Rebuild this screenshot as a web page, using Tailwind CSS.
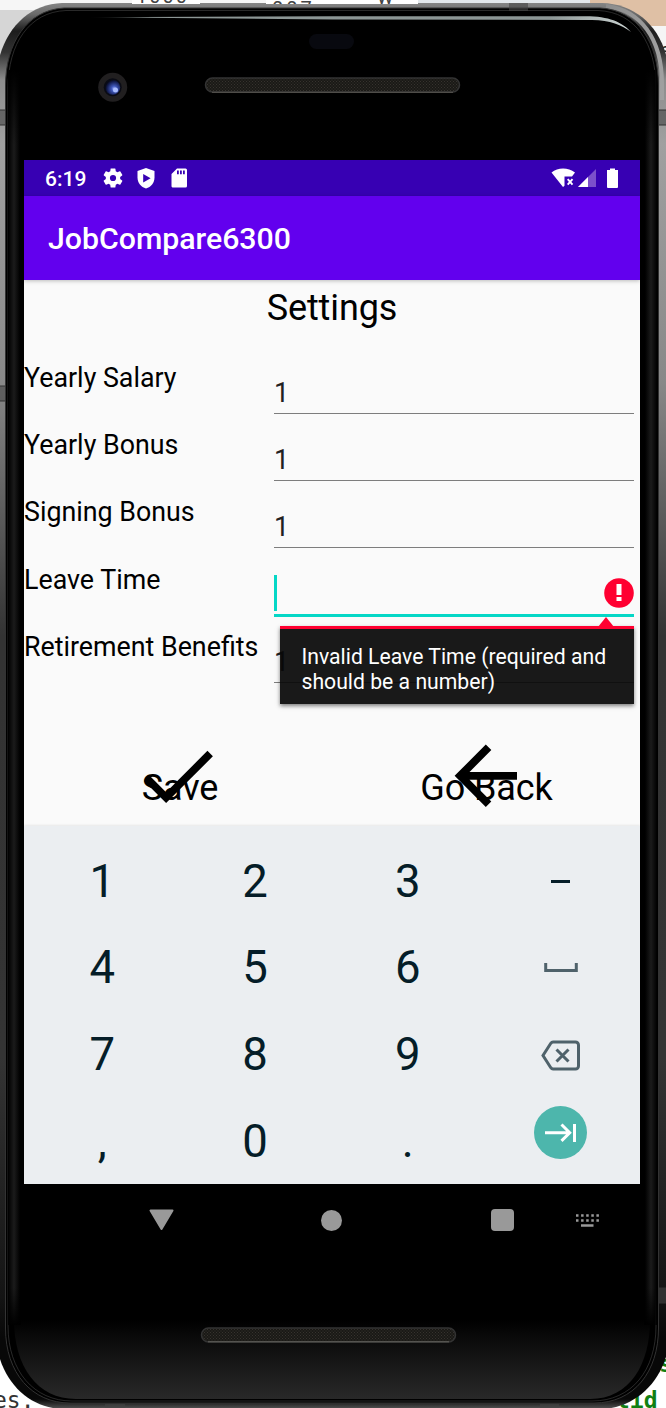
<!DOCTYPE html>
<html lang="en">
<head>
<meta charset="utf-8">
<title>JobCompare6300</title>
<script src="https://cdn.jsdelivr.net/npm/@tailwindcss/browser@4"></script>
</head>
<body class="bg-white">
<div class="relative w-[666px] h-[1408px] overflow-hidden font-[Roboto,sans-serif] text-black">
  <!-- desktop behind the device -->
  <div class="absolute inset-x-0 top-0 h-20 overflow-hidden bg-[#d6d6d6]">
    <div class="h-2.5 bg-[#f6f6f6]"></div>
    <div class="absolute left-[418px] top-0 w-[172px] h-3 bg-[#e3e8ec]"></div>
    <div class="absolute left-[590px] top-0 w-[76px] h-[26px] bg-[#dfc0a5]"></div>
    <div class="absolute left-[640px] top-[26px] w-[26px] h-14 bg-[#f5f5f5]"></div>
    <div class="absolute left-[660px] top-[38px] text-[20px] leading-6 text-[#222]">e</div>
  </div>
  <div class="absolute left-[-7px] top-[1388px] font-[DejaVu_Sans_Mono,monospace] text-[23px] leading-6 text-[#333]">es.</div>
  <div class="absolute left-[616px] top-[1386px] font-[DejaVu_Sans_Mono,monospace] font-bold text-[23px] leading-7 text-[#128012]">tid</div>
  <div class="absolute left-[659px] top-[1350px] font-[DejaVu_Sans_Mono,monospace] font-bold text-[23px] leading-7 text-[#128012]">s</div>

  <!-- device body -->
  <svg class="absolute inset-0" width="666" height="1408" viewBox="0 0 666 1408">
    <defs>
      <linearGradient id="metal" x1="0" y1="0" x2="0" y2="1">
        <stop offset="0" stop-color="#858585"/><stop offset=".008" stop-color="#6a6a6a"/><stop offset=".02" stop-color="#1c1c1c"/><stop offset=".035" stop-color="#333"/><stop offset=".055" stop-color="#8d8d8d"/><stop offset=".1" stop-color="#a0a0a0"/><stop offset=".27" stop-color="#888"/><stop offset=".45" stop-color="#333"/><stop offset=".75" stop-color="#343434"/><stop offset=".92" stop-color="#141414"/><stop offset=".95" stop-color="#080808"/><stop offset=".993" stop-color="#080808"/><stop offset="1" stop-color="#555"/>
      </linearGradient>
      <linearGradient id="rightcorner" x1="0" y1="0" x2="1" y2="0">
        <stop offset="0" stop-color="#8c8c8c"/><stop offset="1" stop-color="#a0a0a0"/>
      </linearGradient>
      <linearGradient id="chin" x1="0" y1="0" x2="0" y2="1">
        <stop offset="0" stop-color="#000"/><stop offset=".2" stop-color="#090909"/><stop offset="1" stop-color="#292929"/>
      </linearGradient>
      <linearGradient id="shine" x1="0" y1="0" x2="1" y2="0">
        <stop offset="0" stop-color="#000"/><stop offset=".12" stop-color="#8c9695"/><stop offset=".85" stop-color="#8c9695"/><stop offset="1" stop-color="#ccd4d3"/>
      </linearGradient>
      <linearGradient id="fade" x1="0" y1="0" x2="0" y2="1">
        <stop offset="0" stop-color="#000"/><stop offset=".06" stop-color="#000" stop-opacity="0"/><stop offset=".97" stop-color="#000" stop-opacity="0"/><stop offset="1" stop-color="#000"/>
      </linearGradient>
      <linearGradient id="edge" x1="0" y1="0" x2="1" y2="0">
        <stop offset="0" stop-color="#000"/><stop offset=".5" stop-color="#1b1b1b"/><stop offset="1" stop-color="#000"/>
      </linearGradient>
      <pattern id="mesh" width="3" height="3" patternUnits="userSpaceOnUse">
        <rect width="3" height="3" fill="#1a1916"/><path d="M0 0h1v1H0zM1.500 1.500h1v1h-1z" fill="#36332e"/>
      </pattern>
      <radialGradient id="lens" cx=".6" cy=".6" r=".6"><stop offset="0" stop-color="#a3b4ff"/><stop offset=".3" stop-color="#4058bb"/><stop offset=".8" stop-color="#121b4d"/><stop offset="1" stop-color="#080a18"/></radialGradient>
    </defs>
    <path d="M62 3H602C642 4 670 36 670 84V1330C670 1376 638 1409 600 1409H64C28 1409-4 1378-4 1332V84C-4 38 24 4 62 3Z" fill="url(#metal)"/>
    <path d="M606 6C640 10 662 38 662 84V100" fill="none" stroke="url(#rightcorner)" stroke-width="4"/>
    <path d="M64 8H600C638 10 658.500 43 658.500 86V1328C658.500 1372 634 1403 594 1403H70C32 1403 5.500 1373 5.500 1328V86C5.500 43 27 10 64 8Z" fill="#000" stroke="#333"/>
    <path d="M66 10.500H598C636 12 656 44 656 88V1326C656 1370 632 1401 592 1401H72C34 1401 8 1371 8 1326V88C8 44 29 12 66 10.500Z" fill="none" stroke="#4a4a4a" stroke-opacity=".55"/>
    <path d="M14 1320H650C650 1364 630 1399 590 1399H76C37 1399 14 1366 14 1320Z" fill="url(#chin)"/>
    <rect x="8" y="70" width="12" height="1255" fill="url(#edge)"/>
    <rect x="645" y="70" width="12" height="1255" fill="url(#edge)"/>
    <rect x="9" y="70" width="12" height="1255" fill="url(#fade)"/>
    <rect x="644" y="70" width="11" height="1255" fill="url(#fade)"/>
    <path d="M0 110h5v15H0zM659 110h7v15h-7zM0 386h5v15H0zM509 3h19v8h-19zM659 1288h7v15h-7zM105 1404h20v4h-20zM540 1404h19v4h-19z" fill="#444" fill-opacity=".6"/>
    <path d="M0 110h5M0 125h5M659 110h7M659 125h7M0 386h5M0 401h5M659 1288h7M659 1303h7" stroke="#333"/>
    <path d="M87 17.200L333 16.300H590C612 17 624 24 631 32C622 25 610 20.200 592 20L333 19.500Z" fill="url(#shine)"/>
    <rect x="309" y="34" width="45" height="15" rx="7.500" fill="#08090f"/>
    <circle cx="112.700" cy="87.300" r="14.500" fill="#211f20"/><circle cx="112.700" cy="87.300" r="9" fill="#0a0b14"/><circle cx="112.700" cy="87.300" r="7.500" fill="url(#lens)"/><circle cx="115.500" cy="90" r="2.500" fill="#a9bcff"/>
    <rect x="205.500" y="78" width="254" height="14" rx="7" fill="url(#mesh)" stroke="#333" stroke-width="1.500"/>
    <path d="M212 92.300h241" stroke="#5a5853"/>
    <rect x="201.500" y="1328" width="254" height="14" rx="7" fill="url(#mesh)" stroke="#333" stroke-width="1.500"/>
    <path d="M208 1341.800h241" stroke="#666460"/>
  </svg>
  <!-- clipped window text above the device -->
  <div class="absolute left-[132px] top-0 w-[68px] h-1 overflow-hidden bg-white"><div class="-mt-[14px] pl-1 text-[20px] leading-5 tracking-[2px] text-[#444]">1000</div></div>
  <div class="absolute left-[266px] top-0 w-[104px] h-1 overflow-hidden bg-white"><div class="-mt-px pl-1.5 text-[20px] leading-5 tracking-[3px] text-[#444]">007</div></div>
  <div class="absolute left-[370px] top-0 w-12 h-1 overflow-hidden bg-white"><div class="-mt-[13px] pl-[7px] text-[22px] leading-5 text-[#444]">w</div></div>

  <!-- device display -->
  <div class="relative pt-40 pl-6 w-[640px]">
    <div class="h-9 bg-[#3700b3] flex items-center pl-[21px] pr-[21px] text-white">
      <span class="w-[58px] text-[21px] leading-9 font-medium pt-0.5">6:19</span>
      <svg width="20" height="20" viewBox="2 2 20 20" fill="white"><path d="M19.140 12.940c.040-.300.060-.610.060-.940 0-.320-.020-.640-.070-.940l2.030-1.580a.49.49 0 0 0 .120-.610l-1.920-3.320a.488.488 0 0 0-.590-.220l-2.390.960c-.500-.380-1.030-.700-1.620-.940l-.360-2.540a.484.484 0 0 0-.480-.410h-3.840c-.240 0-.430.170-.470.410l-.360 2.540c-.590.240-1.130.570-1.620.940l-2.390-.960c-.220-.080-.470 0-.590.220L2.740 8.870c-.120.210-.080.470.120.610l2.030 1.580c-.050.300-.090.630-.090.940s.020.640.070.940l-2.030 1.580a.49.49 0 0 0-.120.610l1.920 3.320c.120.220.370.290.590.220l2.390-.960c.500.380 1.030.700 1.620.940l.360 2.540c.050.240.240.410.480.410h3.840c.240 0 .440-.170.470-.410l.360-2.540c.590-.240 1.130-.560 1.620-.940l2.390.960c.220.080.470 0 .590-.220l1.920-3.320c.120-.220.070-.470-.120-.610zM12 15.100A3.100 3.100 0 1 1 12 8.900a3.100 3.100 0 0 1 0 6.200z"/></svg>
      <svg class="ml-[14px]" width="18" height="21" viewBox="0 0 18 21"><path d="M9 0l8.500 3v6.500C17.500 14.800 14 19 9 20.500 4 19 .5 14.800.5 9.500V3z" fill="white"/><path d="M6.200 6v8.400l7.400-4.200z" fill="#3700b3"/></svg>
      <svg class="ml-4" width="17" height="20" viewBox="0 0 17 20"><path d="M6 .5h8.500a1.500 1.500 0 0 1 1.500 1.500v16a1.500 1.500 0 0 1-1.500 1.500h-13A1.500 1.500 0 0 1 .5 18V6z" fill="white"/><path d="M6 2.500h1.800v3.700H6zM9 2.500h1.800v3.700H9zM12 2.500h1.800v3.700H12z" fill="#3700b3"/></svg>
      <div class="grow"></div>
      <svg width="68" height="20" viewBox="0 0 68 20"><path d="M.5 4.500C7-1 17-1 24 4.500L21 8.500H13.500V17.800L12 19z" fill="white"/><path d="M16.700 11.200l4.800 5.400M21.500 11.200l-4.800 5.400" stroke="white" stroke-width="1.900"/><path d="M45 1v18H27z" fill="#7c50cb"/><path d="M37 9v10H27z" fill="white"/><path d="M59 .5h5V2h3v17a1 1 0 0 1-1 1h-9a1 1 0 0 1-1-1V2h3z" fill="white"/></svg>
    </div>
    <div class="relative z-10 h-[84px] bg-[#6200ee] flex items-center pl-6 pt-px shadow-[0_1px_4px_rgba(0,0,0,.25)]">
      <h1 class="text-[30.250px] leading-9 font-medium text-white">JobCompare6300</h1>
    </div>
    <main class="h-[546px] bg-[#fafafa] overflow-hidden">
      <h2 class="h-[66px] pt-1.5 text-center text-[36px] leading-[44px] tracking-[-.1px]">Settings</h2>
      <div class="h-[67.400px] flex"><label class="w-[250px] pt-4 text-[26.800px] leading-8 whitespace-nowrap">Yearly Salary</label><div class="w-[360px] h-[68px] pt-[29px] text-[27px] leading-[36px] text-[#212121]"><div class="h-[39px] border-b-[1.500px] border-[#7d7d7d]">1</div></div></div>
      <div class="h-[67.400px] flex"><label class="w-[250px] pt-4 text-[26.800px] leading-8 whitespace-nowrap">Yearly Bonus</label><div class="w-[360px] h-[68px] pt-[29px] text-[27px] leading-[36px] text-[#212121]"><div class="h-[39px] border-b-[1.500px] border-[#7d7d7d]">1</div></div></div>
      <div class="h-[67.400px] flex"><label class="w-[250px] pt-[15px] text-[26.800px] leading-8 whitespace-nowrap">Signing Bonus</label><div class="w-[360px] h-[68px] pt-[28px] text-[27px] leading-[36px] text-[#212121]"><div class="h-[39px] border-b-[1.500px] border-[#7d7d7d]">1</div></div></div>
      <div class="h-[67.400px] flex"><label class="w-[250px] pt-4 text-[26.800px] leading-8 whitespace-nowrap">Leave Time</label>
        <div class="relative w-[360px] h-[69px] pt-[27px]">
          <div class="h-[42px] border-b-[3px] border-[#05d7c6] flex justify-between"><div class="w-[3px] h-9 bg-[#05d7c6]"></div>
            <svg class="mt-[3px]" width="30" height="30" viewBox="0 0 30 30"><circle cx="15" cy="15" r="14.800" fill="#ff0031"/><path d="M12.500 6h5v11h-5zM12.500 19h5v4h-5z" fill="white"/></svg></div>
          <!-- validation popup -->
          <div class="absolute left-1.5 top-[78px] w-[354px] h-[78px] border-t-[3px] border-[#ff0031] bg-[#080808]/93 shadow-[0_2px_4px_rgba(0,0,0,.5)] text-white text-[21.200px] leading-[24.500px] pl-[21.500px] pt-4 whitespace-nowrap">Invalid Leave Time (required and<br>should be a number)
            <svg class="absolute right-[20px] -top-3" width="16" height="10" viewBox="0 0 16 10"><path d="M8 0l8 10H0z" fill="#ff0031"/></svg></div>
        </div></div>
      <div class="h-[67.400px] flex"><label class="w-[250px] pt-[15px] text-[26.800px] leading-8 whitespace-nowrap">Retirement Benefits</label><div class="w-[360px] h-[68px] pt-[28px] text-[27px] leading-[36px] text-[#212121]"><div class="h-[39px] border-b-[1.500px] border-[#7d7d7d]">1</div></div></div>
      <div class="grid grid-cols-2 h-[143px] pt-[83px] text-center text-[36px] leading-[44px] tracking-[-.1px]">
        <div class="relative pl-[4px]">Save<svg class="absolute left-[107px] -top-[37px]" width="93.600" height="93.600" viewBox="0 0 24 24"><path d="M9 16.200L4.800 12q-1 0-1.400 1.400L9 19 21 7l-1.400-1.400z"/></svg></div>
        <div class="relative pl-px">Go Back<svg class="absolute left-[107px] -top-[37px]" width="93.600" height="93.600" viewBox="0 0 24 24"><path d="M20 11H7.830l5.590-5.590L12 4l-8 8 8 8 1.410-1.410L7.830 13H20z"/></svg></div>
      </div>
    </main>
    <!-- number pad -->
    <div class="relative h-[358px] bg-[#ebeef1] shadow-[0_-1px_2px_rgba(0,0,0,.08)] pt-3 pl-[2px]">
      <div class="grid grid-cols-[repeat(4,152.700px)] auto-rows-[86.700px] place-items-center text-[45.500px] leading-none text-[#051d28]">
        <span>1</span><span>2</span><span>3</span><div class="w-[19px] h-[3px] bg-[#051d28] ml-px"></div>
        <span>4</span><span>5</span><span>6</span><svg class="ml-0.5" width="34" height="10" viewBox="0 0 34 10"><path d="M1.700 0v7.500h30.600V0" fill="none" stroke="#4f626b" stroke-width="3"/></svg>
        <span>7</span><span>8</span><span>9</span><svg class="mt-px" width="39" height="31" viewBox="0 0 39 31" fill="none" stroke="#4f626b" stroke-width="3"><path d="M12 2h22.500a3 3 0 0 1 3 3v21a3 3 0 0 1-3 3H12q-1.300 0-2.200-1.300L2 15.500 9.800 3.300Q10.700 2 12 2z"/><path d="M15.500 9.500l12 12M27.500 9.500l-12 12"/></svg>
        <span>,</span><span>0</span><span>.</span><svg class="-mt-[17px] ml-px" width="53" height="53" viewBox="0 0 53 53"><circle cx="26.500" cy="26.500" r="26.500" fill="#4db6ac"/><path d="M11 26.700h25M27.500 18.500l8.200 8.200-8.200 8.200M40.500 18v18" fill="none" stroke="white" stroke-width="3"/></svg>
      </div>
    </div>
    <!-- system navigation -->
    <nav class="h-[71px] flex items-center pl-[125px] pt-px">
      <svg width="25" height="22" viewBox="0 0 25 22"><path d="M1.500 1.500h22l-11 18.500z" fill="#999" stroke="#999" stroke-width="2" stroke-linejoin="round"/></svg>
      <div class="ml-[147px] size-[21px] rounded-full bg-[#999]"></div>
      <div class="ml-[149px] size-[22.500px] rounded-sm bg-[#999]"></div>
      <svg class="ml-[61px]" width="24" height="14" viewBox="0 0 24 14"><path d="M1 2.500h23M1 7.500h23" stroke="#999" stroke-width="2.500" stroke-dasharray="2.500 2.600"/><path d="M6 12.500h12.500" stroke="#999" stroke-width="2.500"/></svg>
    </nav>
  </div>
</div>
</body>
</html>
